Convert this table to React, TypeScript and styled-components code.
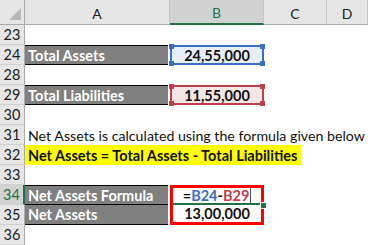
import React from "react";
import styled, { createGlobalStyle } from "styled-components";

const GlobalStyle = createGlobalStyle`
  html, body {
    margin: 0;
    padding: 0;
    background: #ffffff;
  }
  body {
    font-family: "Lato", "Liberation Sans", sans-serif;
  }
`;

const Sheet = styled.div`
  display: grid;
  grid-template-columns: 25px 145px 94px 63px 41px;
  grid-template-rows: 25px repeat(11, 20px);
  width: 368px;
  height: 245px;
  overflow: hidden;
  background: #ffffff;
`;

const Corner = styled.div`
  position: relative;
  background: #e6e6e6;
  border-right: 1px solid #ababab;
  border-bottom: 1px solid #ababab;
  box-sizing: border-box;

  &::after {
    content: "";
    position: absolute;
    right: 3px;
    bottom: 4px;
    width: 12px;
    height: 12px;
    background: #b8b8b8;
    clip-path: polygon(100% 0, 100% 100%, 0 100%);
  }
`;

const ColHead = styled.div<{ $active?: boolean }>`
  display: flex;
  align-items: center;
  justify-content: center;
  box-sizing: border-box;
  padding-top: 2px;
  font-size: 14px;
  color: ${(p) => (p.$active ? "#217346" : "#222222")};
  background: ${(p) => (p.$active ? "#d2d2d2" : "#e6e6e6")};
  border-right: 1px solid #c4c4c4;
  border-bottom: ${(p) => (p.$active ? "2px solid #217346" : "1px solid #ababab")};
`;

const RowHead = styled.div<{ $active?: boolean }>`
  display: flex;
  align-items: center;
  justify-content: center;
  box-sizing: border-box;
  font-size: 14.5px;
  color: ${(p) => (p.$active ? "#217346" : "#222222")};
  background: ${(p) => (p.$active ? "#d2d2d2" : "#e6e6e6")};
  border-right: ${(p) => (p.$active ? "2px solid #217346" : "1px solid #ababab")};
  border-bottom: 1px solid #d0d0d0;
`;

const Blank = styled.div`
  grid-column: 2 / -1;
`;

const Label = styled.div<{ $top?: boolean }>`
  display: flex;
  align-items: center;
  box-sizing: border-box;
  padding-left: 3px;
  margin-right: 2px;
  background: #808080;
  color: #ffffff;
  font-weight: 700;
  font-size: 14.5px;
  border-top: ${(p) => (p.$top ? "1px solid #000000" : "none")};
  border-bottom: 1px solid #000000;
  white-space: nowrap;
`;

const Rest = styled.div<{ $from: number }>`
  grid-column: ${(p) => p.$from} / -1;
`;

const RangeBox = styled.div<{ $line: string; $fill: string }>`
  position: relative;
  display: flex;
  align-items: center;
  justify-content: center;
  box-sizing: border-box;
  border: 2px solid ${(p) => p.$line};
  background: ${(p) => p.$fill};
  font-weight: 700;
  font-size: 14.5px;
  color: #111111;
`;

const Handle = styled.span<{ $color: string; $x: "left" | "right"; $y: "top" | "bottom" }>`
  position: absolute;
  width: 5px;
  height: 5px;
  background: ${(p) => p.$color};
  ${(p) => p.$x}: -3px;
  ${(p) => p.$y}: -3px;
`;

const TextRow = styled.div`
  grid-column: 2 / -1;
  display: flex;
  align-items: center;
  padding-left: 3px;
  font-size: 14.2px;
  color: #111111;
  white-space: nowrap;
`;

const Highlight = styled.div`
  grid-column: 2 / -1;
  display: flex;
  align-items: stretch;
`;

const Marker = styled.span`
  display: flex;
  align-items: center;
  padding: 0 4px 0 3px;
  background: #ffff00;
  font-weight: 700;
  font-size: 14.5px;
  color: #111111;
  white-space: nowrap;
`;

const ResultBox = styled.div`
  grid-column: 3;
  grid-row: span 2;
  position: relative;
  display: flex;
  flex-direction: column;
  box-sizing: border-box;
  border: 3px solid #ff0000;
  font-size: 14.5px;
  font-weight: 700;
  color: #111111;
`;

const FormulaLine = styled.div`
  display: flex;
  align-items: center;
  justify-content: center;
  height: 17px;
  box-sizing: border-box;
  border-bottom: 2px solid #217346;
`;

const ValueLine = styled.div`
  flex: 1;
  display: flex;
  align-items: center;
  justify-content: center;
`;

const Ref = styled.span<{ $color: string }>`
  color: ${(p) => p.$color};
`;

const Caret = styled.span`
  display: inline-block;
  width: 1px;
  height: 15px;
  margin-left: 1px;
  background: #555555;
`;

const FillHandle = styled.span`
  position: absolute;
  right: -6px;
  top: 14px;
  width: 5px;
  height: 5px;
  background: #217346;
  border: 1px solid #ffffff;
`;

const corners = (color: string) => (
  <>
    <Handle $color={color} $x="left" $y="top" />
    <Handle $color={color} $x="right" $y="top" />
    <Handle $color={color} $x="left" $y="bottom" />
    <Handle $color={color} $x="right" $y="bottom" />
  </>
);

const App = () => {
  return (
    <>
      <GlobalStyle />
      <Sheet>
        <Corner />
        <ColHead>A</ColHead>
        <ColHead $active>B</ColHead>
        <ColHead>C</ColHead>
        <ColHead>D</ColHead>

        <RowHead>23</RowHead>
        <Blank />

        <RowHead>24</RowHead>
        <Label $top>Total Assets</Label>
        <RangeBox $line="#3a6ec2" $fill="#e8eef8">
          24,55,000
          {corners("#3a6ec2")}
        </RangeBox>
        <Rest $from={4} />

        <RowHead>28</RowHead>
        <Blank />

        <RowHead>29</RowHead>
        <Label $top>Total Liabilities</Label>
        <RangeBox $line="#c0404c" $fill="#f3e6e7">
          11,55,000
          {corners("#c0404c")}
        </RangeBox>
        <Rest $from={4} />

        <RowHead>30</RowHead>
        <Blank />

        <RowHead>31</RowHead>
        <TextRow>Net Assets is calculated using the formula given below</TextRow>

        <RowHead>32</RowHead>
        <Highlight>
          <Marker>Net Assets = Total Assets - Total Liabilities</Marker>
        </Highlight>

        <RowHead>33</RowHead>
        <Blank />

        <RowHead $active>34</RowHead>
        <Label $top>Net Assets Formula</Label>
        <ResultBox>
          <FormulaLine>
            =<Ref $color="#3a6ec2">B24</Ref>-<Ref $color="#c0404c">B29</Ref>
            <Caret />
          </FormulaLine>
          <ValueLine>13,00,000</ValueLine>
          <FillHandle />
        </ResultBox>
        <Rest $from={4} />

        <RowHead>35</RowHead>
        <Label>Net Assets</Label>
        <Rest $from={4} />

        <RowHead>36</RowHead>
        <Blank />
      </Sheet>
    </>
  );
};

export default App;
